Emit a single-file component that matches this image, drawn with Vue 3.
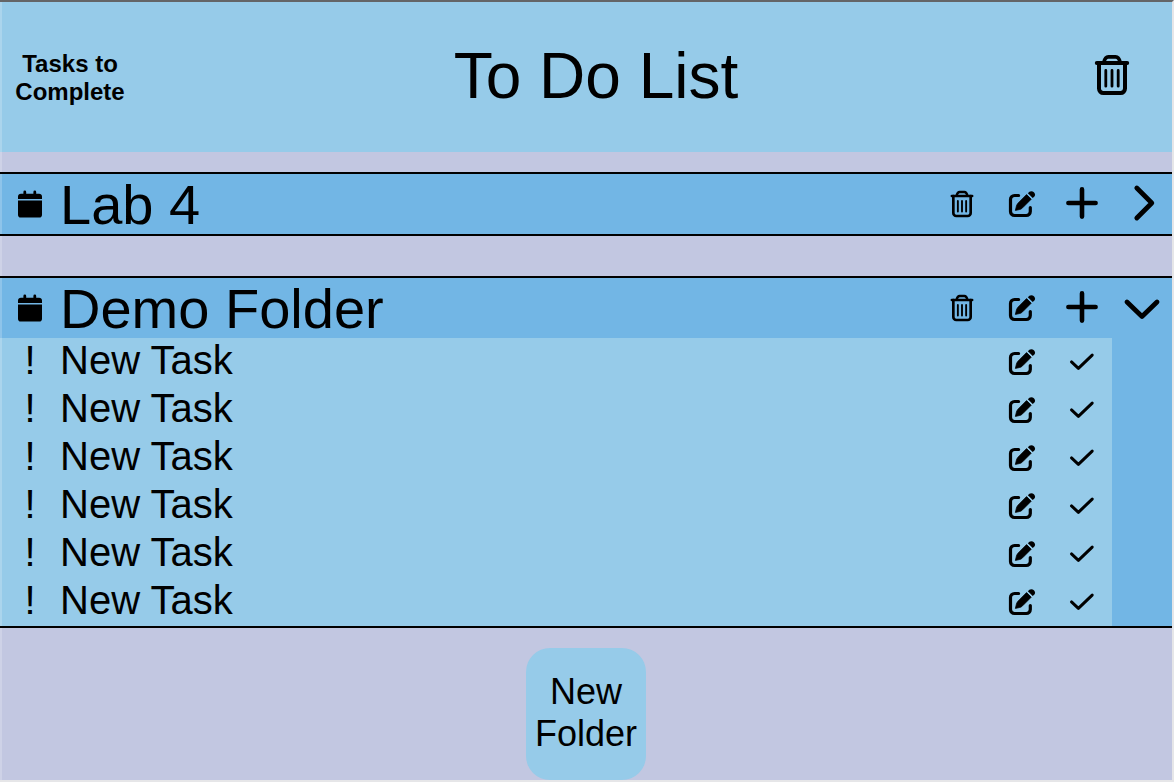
<script setup>
import { ref } from 'vue'

const makeTasks = (count) =>
  Array.from({ length: count }, (_, i) => ({ id: i + 1, name: 'New Task' }))

const folders = ref([
  { id: 1, name: 'Lab 4', open: false, tasks: [] },
  { id: 2, name: 'Demo Folder', open: true, tasks: makeTasks(6) },
])

const addTask = (folder) => {
  folder.tasks.push({ id: Date.now(), name: 'New Task' })
}
const completeTask = (folder, task) => {
  folder.tasks = folder.tasks.filter((t) => t !== task)
}
const removeFolder = (folder) => {
  folders.value = folders.value.filter((f) => f !== folder)
}
const addFolder = () => {
  folders.value.push({ id: Date.now(), name: 'New Folder', open: false, tasks: [] })
}
</script>

<template>
  <svg class="sprite" aria-hidden="true">
    <symbol id="trash" viewBox="0 0 36 42">
      <g fill="none" stroke="currentColor" stroke-linecap="round" stroke-linejoin="round">
        <path stroke-width="4" d="M5 9V34.6a4.4 4.4 0 0 0 4.4 4.4H26.6A4.4 4.4 0 0 0 31 34.6V9" />
        <path stroke-width="4" d="M2.8 9H33.2" />
        <path stroke-width="3.6" d="M9.8 8.5C10.6 5 12.2 2.9 14.4 2.9H21.6C23.8 2.9 25.4 5 26.2 8.5" />
        <path stroke-width="2.8" d="M11.8 16.4V32.2M18 16.4V32.2M24.2 16.4V32.2" />
      </g>
    </symbol>
    <symbol id="edit" viewBox="0 0 28 28">
      <path fill="none" stroke="currentColor" stroke-width="3.2" stroke-linecap="round" d="M10.6 5.5H6.5a4 4 0 0 0-4 4V21.5a4 4 0 0 0 4 4H18.3a4 4 0 0 0 4-4V17.5" />
      <path fill="currentColor" stroke="currentColor" stroke-width=".8" stroke-linejoin="round" d="M7.4 20.4L8.4 16.2Q8.9 14.4 10 13.2L18.6 4.6L23.2 9.2L14.6 17.8Q13.2 19.2 11.6 19.5Z" />
      <path fill="currentColor" d="M19.9 3.2L21.4 1.8C24.4-.5 29 3.8 26.2 6.7L24.7 8.1Z" />
    </symbol>
    <symbol id="plus" viewBox="0 0 40 40">
      <path fill="none" stroke="currentColor" stroke-width="4.6" stroke-linecap="round" d="M6.4 19H33.6M20 5.4V32.6" />
    </symbol>
    <symbol id="right" viewBox="0 0 40 40">
      <path fill="none" stroke="currentColor" stroke-width="4.8" stroke-linecap="round" stroke-linejoin="round" d="M14.8 4L29.8 19L14.8 34" />
    </symbol>
    <symbol id="down" viewBox="0 0 40 40">
      <path fill="none" stroke="currentColor" stroke-width="4.8" stroke-linecap="round" stroke-linejoin="round" d="M5 14L20 28.4L35 14" />
    </symbol>
    <symbol id="check" viewBox="0 0 28 28">
      <path fill="none" stroke="currentColor" stroke-width="3" stroke-linecap="round" stroke-linejoin="round" d="M3.5 13.9L10.4 20.3L24.2 7.1" />
    </symbol>
    <symbol id="calendar" viewBox="0 0 28 28">
      <g fill="currentColor">
        <path d="M2 9V6.6A3 3 0 0 1 5 3.8H7.4V2A1.4 1.4 0 0 1 10.2 2V3.8H17.4V2A1.4 1.4 0 0 1 20.2 2V3.8H23A3 3 0 0 1 26 6.6V9Z" />
        <path d="M2 10.6H26V24.8A2.8 2.8 0 0 1 23.2 27.6H4.8A2.8 2.8 0 0 1 2 24.8Z" />
      </g>
    </symbol>
  </svg>

  <div class="page">
    <header class="header">
      <p class="summary">Tasks to Complete</p>
      <h1 class="title">To Do List</h1>
      <button class="icon-button" type="button" aria-label="Trash">
        <svg class="trash-large"><use href="#trash" /></svg>
      </button>
    </header>

    <main class="folders">
      <section v-for="folder in folders" :key="folder.id" class="folder">
        <div class="folder-head">
          <svg class="small marker"><use href="#calendar" /></svg>
          <h2 class="folder-name">{{ folder.name }}</h2>
          <button class="icon-button" type="button" aria-label="Delete folder" @click="removeFolder(folder)">
            <svg class="trash-small"><use href="#trash" /></svg>
          </button>
          <button class="icon-button" type="button" aria-label="Edit folder">
            <svg class="small"><use href="#edit" /></svg>
          </button>
          <button class="icon-button" type="button" aria-label="Add task" @click="addTask(folder)">
            <svg class="large"><use href="#plus" /></svg>
          </button>
          <button class="icon-button" type="button" aria-label="Toggle folder" :aria-expanded="folder.open" @click="folder.open = !folder.open">
            <svg class="large"><use :href="folder.open ? '#down' : '#right'" /></svg>
          </button>
        </div>
        <ul v-if="folder.open" class="tasks">
          <li v-for="task in folder.tasks" :key="task.id" class="task">
            <span class="priority">!</span>
            <span class="task-name">{{ task.name }}</span>
            <button class="icon-button" type="button" aria-label="Edit task">
              <svg class="small"><use href="#edit" /></svg>
            </button>
            <button class="icon-button" type="button" aria-label="Complete task" @click="completeTask(folder, task)">
              <svg class="small"><use href="#check" /></svg>
            </button>
          </li>
        </ul>
      </section>
    </main>

    <button class="new-folder" type="button" @click="addFolder">New Folder</button>
  </div>
</template>

<style>
body {
  margin: 0;
}
</style>

<style scoped>
.sprite {
  position: absolute;
  width: 0;
  height: 0;
}

.page {
  --edge: inset 2px 0 rgba(255, 255, 255, 0.2);
  box-sizing: border-box;
  display: flex;
  flex-direction: column;
  min-height: 100vh;
  border-top: 2px solid #646567;
  border-right: 2px solid #e6e6e8;
  border-bottom: 2px solid #e6e6e8;
  background: #c2c7e1;
  box-shadow: var(--edge);
  color: #000;
  font-family: "Liberation Sans", Arial, sans-serif;
}

.header {
  display: grid;
  grid-template-columns: 140px 1fr 120px;
  align-items: center;
  min-height: 150px;
  background: #96cbe9;
  box-shadow: var(--edge);
}

.summary {
  margin: 2px 0 0;
  padding: 0 8px;
  font-size: 24px;
  font-weight: 700;
  line-height: 28px;
  text-align: center;
}

.title {
  margin: 0 0 2px;
  font-size: 64px;
  font-weight: 400;
  line-height: 72px;
  text-align: center;
}

.header .icon-button {
  margin-bottom: 4px;
}

.icon-button {
  display: flex;
  align-items: center;
  justify-content: center;
  padding: 0;
  border: 0;
  background: none;
  color: inherit;
  cursor: pointer;
}

.trash-large {
  width: 36px;
  height: 42px;
}

.trash-small {
  width: 24px;
  height: 28px;
}

.small {
  width: 28px;
  height: 28px;
}

.large {
  width: 40px;
  height: 40px;
}

.folders {
  display: flex;
  flex-direction: column;
  gap: 40px;
  padding: 20px 0;
}

.folder {
  border-top: 2px solid #000;
  border-bottom: 2px solid #000;
  background: #72b6e5;
  box-shadow: var(--edge);
}

.folder-head {
  display: grid;
  grid-template-columns: 60px 1fr repeat(4, 60px);
  min-height: 60px;
}

.marker {
  place-self: center;
}

.folder-name {
  margin: 0;
  padding-top: 2px;
  font-size: 56px;
  font-weight: 400;
  line-height: 58px;
}

.tasks {
  margin: 0 60px 0 0;
  padding: 0;
  list-style: none;
  background: #96cbe9;
  box-shadow: var(--edge);
}

.task {
  display: grid;
  grid-template-columns: 60px 1fr 60px 60px;
  min-height: 48px;
  font-size: 40px;
  line-height: 44px;
}

.priority {
  text-align: center;
}

.new-folder {
  align-self: center;
  width: 120px;
  padding: 23px 8px 25px;
  border: 0;
  border-radius: 24px;
  background: #96cbe9;
  color: inherit;
  font-family: inherit;
  font-size: 36px;
  line-height: 42px;
  text-align: center;
  cursor: pointer;
}
</style>
